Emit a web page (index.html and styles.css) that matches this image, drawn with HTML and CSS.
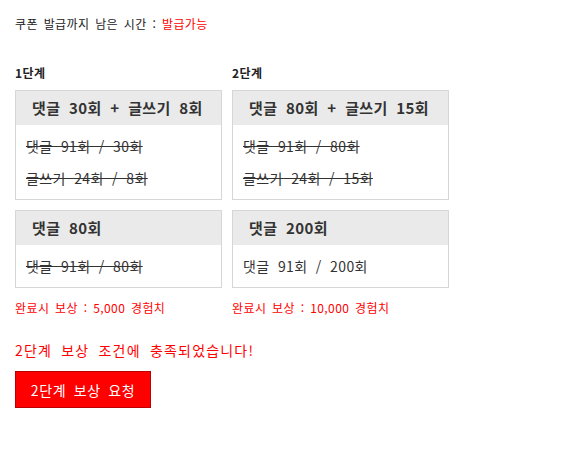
FILE: index.html
```html
<!DOCTYPE html>
<html lang="ko">
<head>
	<meta charset="UTF-8">
	<title>쿠폰 미션</title>
	<link rel="stylesheet" href="styles.css">
</head>
<body>
<main class="page">
	<p class="notice">쿠폰 발급까지 남은 시간 : <span class="red">발급가능</span></p>

	<div class="steps">
		<section class="step step-one">
			<h2 class="step-title">1단계</h2>
			<div class="mission">
				<div class="mission-head">댓글 30회 + 글쓰기 8회</div>
				<div class="mission-body">
					<p class="done">댓글 91회 / 30회</p>
					<p class="done">글쓰기 24회 / 8회</p>
				</div>
			</div>
			<div class="mission">
				<div class="mission-head">댓글 80회</div>
				<div class="mission-body">
					<p class="done">댓글 91회 / 80회</p>
				</div>
			</div>
			<p class="reward">완료시 보상 : 5,000 경험치</p>
		</section>

		<section class="step step-two">
			<h2 class="step-title">2단계</h2>
			<div class="mission">
				<div class="mission-head">댓글 80회 + 글쓰기 15회</div>
				<div class="mission-body">
					<p class="done">댓글 91회 / 80회</p>
					<p class="done">글쓰기 24회 / 15회</p>
				</div>
			</div>
			<div class="mission">
				<div class="mission-head">댓글 200회</div>
				<div class="mission-body">
					<p>댓글 91회 / 200회</p>
				</div>
			</div>
			<p class="reward">완료시 보상 : 10,000 경험치</p>
		</section>
	</div>

	<p class="message">2단계 보상 조건에 충족되었습니다!</p>
	<button type="button" class="reward-btn">2단계 보상 요청</button>
</main>
</body>
</html>
```
FILE: styles.css
```css
body{
	margin: 0;
	font-family: "Noto Sans CJK KR", "DejaVu Sans", sans-serif;
	color: #222;
	background: #fff;
}

.page{
	padding: 15px;
}

p{
	margin: 0;
}

.red{
	color: #f00;
}

.notice{
	font-size: 12px;
	line-height: 18px;
	letter-spacing: 0.4px;
	word-spacing: 2px;
}

.steps{
	display: flex;
	gap: 10px;
	margin-top: 31px;
}

.step-one{
	width: 207px;
}
.step-two{
	width: 217px;
}

.step-title{
	margin: 0 0 8px;
	font-size: 12px;
	line-height: 18px;
	font-weight: bold;
	letter-spacing: 0.5px;
}

.mission{
	border: 1px solid #d6d6d6;
	margin-bottom: 10px;
}

.mission-head{
	background: #eaeaea;
	height: 34px;
	line-height: 34px;
	padding-left: 16px;
	font-size: 15px;
	font-weight: bold;
	color: #333;
	letter-spacing: 0.4px;
	word-spacing: 4px;
	white-space: nowrap;
}

.mission-body{
	padding: 10px 10px;
	display: flex;
	flex-direction: column;
	gap: 10px;
}
.mission-body p{
	font-size: 14px;
	line-height: 22px;
	color: #333;
	letter-spacing: 0.4px;
	word-spacing: 4px;
	white-space: nowrap;
}
.mission-body .done{
	text-decoration: line-through;
}

.reward{
	margin-top: 11px;
	font-size: 12px;
	line-height: 18px;
	color: #f00;
	letter-spacing: 0.4px;
	word-spacing: 2px;
}

.message{
	margin-top: 23px;
	font-size: 14px;
	line-height: 20px;
	color: #f00;
	letter-spacing: 1.2px;
	word-spacing: 4px;
}

.reward-btn{
	display: block;
	margin-top: 11px;
	width: 136px;
	height: 37px;
	background: #f00;
	border: 1px solid #b00;
	color: #fff;
	font-family: inherit;
	font-size: 14px;
	letter-spacing: 0.6px;
	word-spacing: 3px;
	padding: 0;
	cursor: pointer;
}
```
